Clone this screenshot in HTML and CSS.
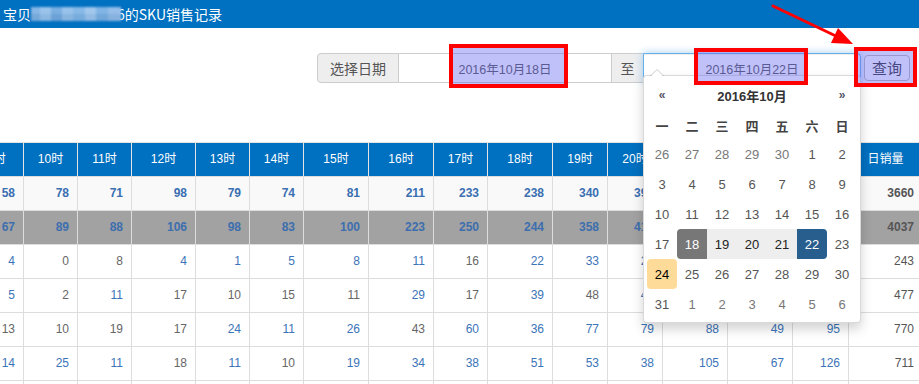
FILE: index.html
```html
<!DOCTYPE html>
<html lang="zh-CN">
<head>
<meta charset="utf-8">
<title>SKU销售记录</title>
<link rel="stylesheet" href="styles.css">
</head>
<body>
<div class="page">
  <header class="topbar">
    <span class="title">宝贝</span><span class="blur"></span><span class="title">6的SKU销售记录</span>
  </header>

  <form class="query">
    <span class="addon addon-first">选择日期</span>
    <input class="date-input date-from" type="text" value="2016年10月18日" readonly>
    <span class="addon addon-mid">至</span>
    <input class="date-input date-to" type="text" value="2016年10月22日" readonly>
    <button class="btn" type="button">查询</button>
  </form>

  <div class="table-wrap">
    <table class="sku">
      <colgroup>
        <col class="w54"><col class="w54"><col class="w54"><col class="w64"><col class="w54"><col class="w54"><col class="w65"><col class="w65"><col class="w54"><col class="w65"><col class="w55"><col class="w55"><col class="w65"><col class="w65"><col class="w56"><col class="w74">
      </colgroup>
      <thead>
        <tr><th>9时</th><th>10时</th><th>11时</th><th>12时</th><th>13时</th><th>14时</th><th>15时</th><th>16时</th><th>17时</th><th>18时</th><th>19时</th><th>20时</th><th>21时</th><th>22时</th><th>23时</th><th>日销量</th></tr>
      </thead>
      <tbody>
        <tr class="sum-row">
          <td><a>58</a></td><td><a>78</a></td><td><a>71</a></td><td><a>98</a></td><td><a>79</a></td><td><a>74</a></td><td><a>81</a></td><td><a>211</a></td><td><a>233</a></td><td><a>238</a></td><td><a>340</a></td><td><a>392</a></td><td><a>388</a></td><td><a>325</a></td><td><a>274</a></td><td class="total">3660</td>
        </tr>
        <tr class="sum-row alt">
          <td><a>67</a></td><td><a>89</a></td><td><a>88</a></td><td><a>106</a></td><td><a>98</a></td><td><a>83</a></td><td><a>100</a></td><td><a>223</a></td><td><a>250</a></td><td><a>244</a></td><td><a>358</a></td><td><a>415</a></td><td><a>402</a></td><td><a>341</a></td><td><a>289</a></td><td class="total">4037</td>
        </tr>
        <tr>
          <td><a>4</a></td><td>0</td><td>8</td><td><a>4</a></td><td><a>1</a></td><td><a>5</a></td><td><a>8</a></td><td><a>11</a></td><td>16</td><td><a>22</a></td><td><a>33</a></td><td><a>25</a></td><td><a>21</a></td><td><a>14</a></td><td><a>9</a></td><td class="total">243</td>
        </tr>
        <tr>
          <td><a>5</a></td><td>2</td><td><a>11</a></td><td>17</td><td>10</td><td>15</td><td>11</td><td><a>29</a></td><td>17</td><td><a>39</a></td><td>48</td><td><a>41</a></td><td><a>37</a></td><td><a>30</a></td><td><a>22</a></td><td class="total">477</td>
        </tr>
        <tr>
          <td>13</td><td>10</td><td>19</td><td>17</td><td><a>24</a></td><td><a>11</a></td><td><a>26</a></td><td>43</td><td><a>60</a></td><td><a>36</a></td><td><a>77</a></td><td><a>79</a></td><td><a>88</a></td><td><a>49</a></td><td><a>95</a></td><td class="total">770</td>
        </tr>
        <tr>
          <td><a>14</a></td><td><a>25</a></td><td><a>11</a></td><td>18</td><td><a>11</a></td><td>10</td><td><a>19</a></td><td><a>34</a></td><td><a>38</a></td><td><a>51</a></td><td><a>53</a></td><td><a>38</a></td><td><a>105</a></td><td><a>67</a></td><td><a>126</a></td><td class="total">711</td>
        </tr>
        <tr>
          <td><a>6</a></td><td>3</td><td><a>9</a></td><td>12</td><td><a>8</a></td><td>7</td><td><a>14</a></td><td><a>20</a></td><td><a>25</a></td><td><a>31</a></td><td><a>36</a></td><td><a>29</a></td><td><a>40</a></td><td><a>33</a></td><td><a>45</a></td><td class="total">402</td>
        </tr>
      </tbody>
    </table>
  </div>

  <div class="datepicker">
    <div class="dp-head">
      <span class="dp-nav">«</span>
      <span class="dp-title">2016年10月</span>
      <span class="dp-nav">»</span>
    </div>
    <div class="dp-dow">
      <span>一</span><span>二</span><span>三</span><span>四</span><span>五</span><span>六</span><span>日</span>
    </div>
    <div class="dp-days">
      <span class="old">26</span><span class="old">27</span><span class="old">28</span><span class="old">29</span><span class="old">30</span><span>1</span><span>2</span>
      <span>3</span><span>4</span><span>5</span><span>6</span><span>7</span><span>8</span><span>9</span>
      <span>10</span><span>11</span><span>12</span><span>13</span><span>14</span><span>15</span><span>16</span>
      <span>17</span><span class="range-start">18</span><span class="range">19</span><span class="range">20</span><span class="range">21</span><span class="range-end">22</span><span>23</span>
      <span class="today">24</span><span>25</span><span>26</span><span>27</span><span>28</span><span>29</span><span>30</span>
      <span>31</span><span class="new">1</span><span class="new">2</span><span class="new">3</span><span class="new">4</span><span class="new">5</span><span class="new">6</span>
    </div>
  </div>

  <div class="mark mark-from"></div>
  <div class="mark mark-to"></div>
  <div class="mark mark-btn"></div>
  <svg class="arrow" width="919" height="60" viewBox="0 0 919 60">
    <line x1="773" y1="6" x2="840" y2="38" stroke="#f00" stroke-width="3" stroke-linecap="round"/>
    <polygon points="853,44 831,43 838,28" fill="#f00"/>
  </svg>
</div>
</body>
</html>
```
FILE: styles.css
```css
html, body {
  margin: 0;
  padding: 0;
}
body {
  width: 919px;
  height: 384px;
  overflow: hidden;
  background: #fff;
  font-family: "Liberation Sans", Arial, "Noto Sans CJK SC", sans-serif;
  color: #333;
}
.page {
  position: relative;
  width: 919px;
  height: 384px;
  overflow: hidden;
}

/* top bar */
.topbar {
  height: 28px;
  background: #0070c0;
  color: #fff;
  display: flex;
  align-items: center;
  padding-left: 3px;
  font-family: "Noto Sans CJK SC", sans-serif;
  font-size: 14px;
  line-height: 28px;
}
.blur {
  display: inline-block;
  width: 90px;
  height: 14px;
  margin-right: -4px;
  position: relative;
  z-index: 1;
  background:
    linear-gradient(180deg, rgba(255,255,255,.08) 0 50%, rgba(0,0,0,.04) 50% 100%),
    linear-gradient(90deg, #7bb0e3 0 10%, #93bfea 10% 22%, #6fa8df 22% 34%, #8fbde9 34% 47%, #7db3e5 47% 60%, #99c3ec 60% 72%, #76aee2 72% 86%, #8cb9e8 86% 100%);
  filter: blur(1px);
}

/* query form */
.query {
  display: flex;
  justify-content: flex-end;
  align-items: center;
  margin: 25px 0 0;
  padding-right: 9px;
  height: 30px;
}
.addon {
  box-sizing: border-box;
  height: 30px;
  display: flex;
  align-items: center;
  justify-content: center;
  background: #eee;
  border: 1px solid #ccc;
  color: #555;
  font-family: "Noto Sans CJK SC", sans-serif;
  font-size: 14px;
}
.addon-first {
  width: 82px;
  border-radius: 4px 0 0 4px;
}
.addon-mid {
  width: 31px;
  border-left: 0;
  border-right: 0;
}
.date-input {
  box-sizing: border-box;
  height: 30px;
  margin: 0;
  padding: 0 6px;
  border: 1px solid #ccc;
  background: #fff;
  color: #555;
  font-family: "Liberation Sans", Arial, "Noto Sans CJK SC", sans-serif;
  font-size: 12.5px;
  text-align: center;
  outline: none;
}
.date-from {
  width: 213px;
  border-left: 0;
}
.date-to {
  width: 218px;
  border-color: #66afe9;
  border-radius: 0 4px 4px 0;
  box-shadow: inset 0 1px 1px rgba(0,0,0,.075), 0 0 8px rgba(102,175,233,.6);
}
.btn {
  box-sizing: border-box;
  width: 46px;
  height: 26px;
  margin-left: 3px;
  padding: 0;
  background: #fff;
  border: 1px solid #bbb;
  border-radius: 4px;
  color: #333;
  font-family: "Noto Sans CJK SC", sans-serif;
  font-size: 15px;
  line-height: 24px;
}

/* table */
.table-wrap {
  margin-top: 59px;
}
.sku {
  margin-left: -31px;
  width: 953px;
  table-layout: fixed;
  border-collapse: collapse;
  font-size: 12px;
  line-height: 17px;
}
.w54 { width: 54px; }
.w55 { width: 55px; }
.w56 { width: 56px; }
.w64 { width: 64px; }
.w65 { width: 65px; }
.w74 { width: 74px; }
.sku th,
.sku td {
  padding: 8px;
  border: 1px solid #ddd;
  white-space: nowrap;
}
.sku th {
  background: #0070c0;
  color: #fff;
  font-weight: normal;
  text-align: center;
  font-family: "Liberation Sans", Arial, "Noto Sans CJK SC", sans-serif;
  border-color: #e4e4e4;
  border-bottom-color: #ddd;
}
.sku td {
  text-align: right;
  color: #666;
}
.sku td a {
  color: #3b74b8;
}
.sku td.total {
  color: #555;
}
.sum-row td {
  background: #f9f9f9;
  font-weight: bold;
}
.sum-row.alt td {
  background: #a2a2a2;
}
.sum-row td a {
  color: #3a6fb2;
}
.sum-row.alt td a {
  color: #3d6eae;
}

/* datepicker popup */
.datepicker {
  position: absolute;
  left: 643px;
  top: 75px;
  width: 218px;
  box-sizing: border-box;
  padding: 3px;
  background: #fff;
  border: 1px solid rgba(0,0,0,.15);
  border-radius: 4px;
  box-shadow: 0 6px 12px rgba(0,0,0,.175);
  font-size: 13px;
  color: #555;
  z-index: 5;
}
.datepicker::before {
  content: "";
  position: absolute;
  top: -7px;
  left: 6px;
  border-left: 7px solid transparent;
  border-right: 7px solid transparent;
  border-bottom: 7px solid rgba(0,0,0,.2);
}
.datepicker::after {
  content: "";
  position: absolute;
  top: -6px;
  left: 7px;
  border-left: 6px solid transparent;
  border-right: 6px solid transparent;
  border-bottom: 6px solid #fff;
}
.dp-head,
.dp-dow,
.dp-days {
  display: grid;
  grid-template-columns: repeat(7, 30px);
}
.dp-head {
  height: 32px;
  align-items: center;
  text-align: center;
}
.dp-title {
  grid-column: span 5;
  font-weight: bold;
  color: #333;
  font-family: "Liberation Sans", Arial, "Noto Sans CJK SC", sans-serif;
}
.dp-nav {
  color: #556;
  font-weight: bold;
  font-size: 12px;
}
.dp-dow {
  height: 28px;
  align-items: center;
  text-align: center;
  font-weight: bold;
  color: #444;
  font-family: "Noto Sans CJK SC", sans-serif;
}
.dp-days {
  grid-auto-rows: 30px;
}
.dp-days span {
  display: flex;
  align-items: center;
  justify-content: center;
  color: #555;
  border-radius: 4px;
}
.dp-days .old,
.dp-days .new {
  color: #777;
}
.dp-days .range {
  background: #eee;
  color: #222;
  border-radius: 0;
}
.dp-days .range-start {
  background: #777;
  color: #fff;
  border-radius: 4px 0 0 4px;
}
.dp-days .range-end {
  background: #285e8e;
  color: #fff;
  border-radius: 0 4px 4px 0;
}
.dp-days .today {
  background: #ffdb99;
  color: #000;
}

/* annotations */
.mark {
  position: absolute;
  box-sizing: border-box;
  border: 4px solid #f00;
  background: rgba(100,100,240,.4);
  z-index: 10;
}
.mark-from { left: 449px; top: 44px; width: 119px; height: 44px; }
.mark-to { left: 694px; top: 48px; width: 114px; height: 37px; }
.mark-btn { left: 854px; top: 47px; width: 63px; height: 40px; }
.arrow {
  position: absolute;
  left: 0;
  top: 0;
  z-index: 11;
}
```
